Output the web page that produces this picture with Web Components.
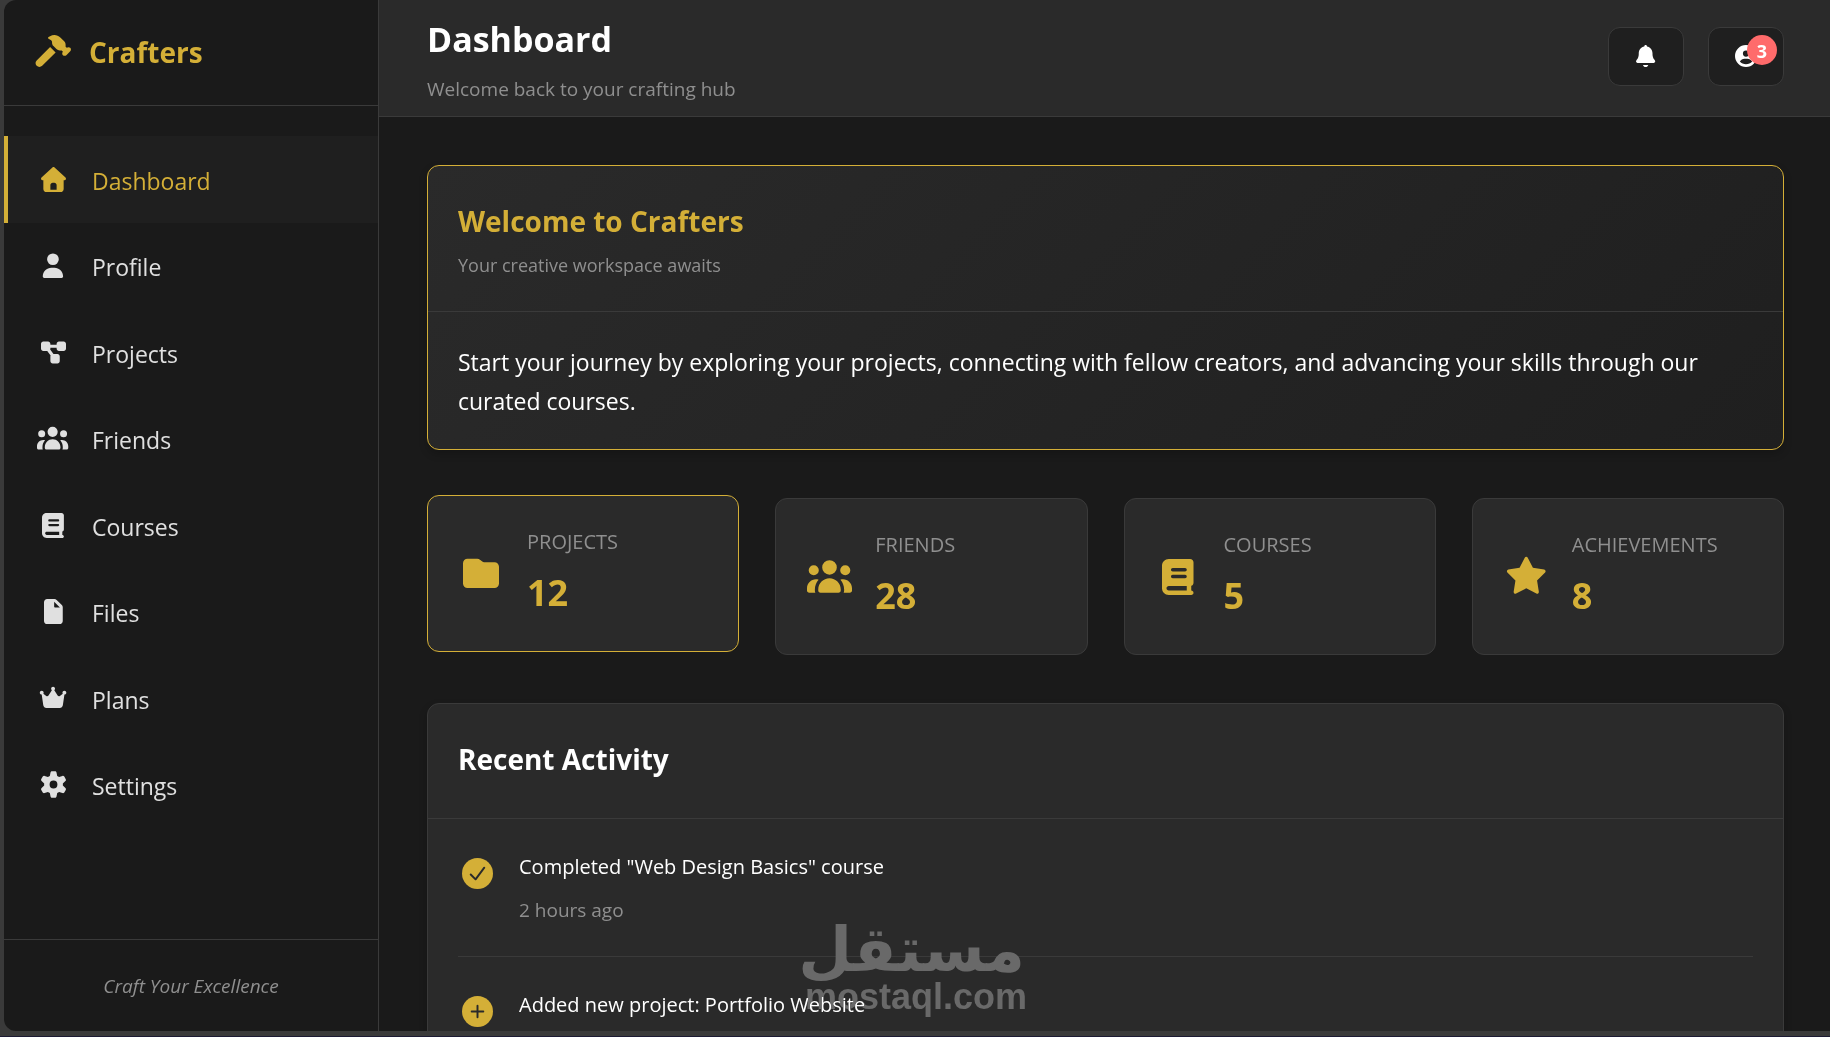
<!DOCTYPE html>
<html lang="en">
<head>
<meta charset="utf-8">
<meta name="viewport" content="width=device-width, initial-scale=1">
<title>Crafters - Dashboard</title>
<style>
    html, body { height: 100%; }
    body
    {
        margin: 0;
        overflow: hidden;
        background: #3a3a3a;
        color: #ffffff;
        font-family: "Segoe UI", "Open Sans", "Noto Sans", sans-serif;

        --gold: #d4af37;
        --dark: #1a1a1a;
        --card: #2a2a2a;
        --line: #3a3a3a;
        --muted: #8f8f8f;
        --text: #e0e0e0;
    }
</style>
</head>
<body>

<crafters-app>
    <crafters-sidebar slot="sidebar">
        <span slot="brand">Crafters</span>
        <nav-item icon="house" href="#dashboard" active>Dashboard</nav-item>
        <nav-item icon="user" href="#profile">Profile</nav-item>
        <nav-item icon="diagram" href="#projects">Projects</nav-item>
        <nav-item icon="users" href="#friends">Friends</nav-item>
        <nav-item icon="book" href="#courses">Courses</nav-item>
        <nav-item icon="file" href="#files">Files</nav-item>
        <nav-item icon="crown" href="#plans">Plans</nav-item>
        <nav-item icon="gear" href="#settings">Settings</nav-item>
        <span slot="footer">Craft Your Excellence</span>
    </crafters-sidebar>

    <page-header slot="header">
        <span slot="title">Dashboard</span>
        <span slot="subtitle">Welcome back to your crafting hub</span>
        <icon-button slot="actions" icon="bell" label="Notifications"></icon-button>
        <icon-button slot="actions" icon="account" label="Account" badge="3"></icon-button>
    </page-header>

    <content-card highlight>
        <span slot="title">Welcome to Crafters</span>
        <span slot="subtitle">Your creative workspace awaits</span>
        <card-text>Start your journey by exploring your projects, connecting with fellow creators, and advancing your skills through our curated courses.</card-text>
    </content-card>

    <stat-grid>
        <stat-card icon="folder" label="Projects" raised>12</stat-card>
        <stat-card icon="users" label="Friends">28</stat-card>
        <stat-card icon="book" label="Courses">5</stat-card>
        <stat-card icon="star" label="Achievements">8</stat-card>
    </stat-grid>

    <content-card>
        <span slot="title">Recent Activity</span>
        <activity-item icon="check" time="2 hours ago">Completed "Web Design Basics" course</activity-item>
        <activity-item icon="plus">Added new project: Portfolio Website</activity-item>
    </content-card>

    <water-mark slot="overlay">
        <span slot="name">مستقل</span>
        <span slot="site">mostaql.com</span>
    </water-mark>
</crafters-app>

<script>

// name: [viewBox, markup]
const ICONS =
{
    hammer: ["32 -16 576 528", `<path d="M246.9 18.3L271 3.8c21.6-13 46.3-19.8 71.5-19.8 36.8 0 72.2 14.6 98.2 40.7l63.9 63.9c15 15 23.4 35.4 23.4 56.6l0 30.9 19.7 19.7 0 0c15.6-15.6 40.9-15.6 56.6 0s15.6 40.9 0 56.6l-64 64c-15.6 15.6-40.9 15.6-56.6 0s-15.6-40.9 0-56.6L464 240l-30.9 0c-21.2 0-41.6-8.4-56.6-23.4l-49.1-49.1c-15-15-23.4-35.4-23.4-56.6l0-12.7c0-11.2-5.9-21.7-15.5-27.4l-41.6-25c-10.4-6.2-10.4-21.2 0-27.4zM50.7 402.7l222.1-222.1 90.5 90.5-222.1 222.1c-25 25-65.5 25-90.5 0s-25-65.5 0-90.5z"/>`],
    house: ["0 0 512 512", `<path d="M277.8 8.6c-12.3-11.4-31.3-11.4-43.5 0l-224 208c-9.6 9-12.8 22.9-8 35.1S18.8 272 32 272l16 0 0 176c0 35.3 28.7 64 64 64l288 0c35.3 0 64-28.7 64-64l0-176 16 0c13.2 0 25-8.1 29.8-20.3s1.6-26.2-8-35.1l-224-208zM240 320l32 0c26.5 0 48 21.5 48 48l0 96-128 0 0-96c0-26.5 21.5-48 48-48z"/>`],
    user: ["0 0 448 512", `<path d="M224 248a120 120 0 1 0 0-240 120 120 0 1 0 0 240zm-29.7 56C95.8 304 16 383.8 16 482.3 16 498.7 29.3 512 45.7 512l356.6 0c16.4 0 29.7-13.3 29.7-29.7 0-98.5-79.8-178.3-178.3-178.3l-59.4 0z"/>`],
    diagram: ["0 0 512 512", `<path d="M0 80C0 53.5 21.5 32 48 32l96 0c26.5 0 48 21.5 48 48l0 16 128 0 0-16c0-26.5 21.5-48 48-48l96 0c26.5 0 48 21.5 48 48l0 96c0 26.5-21.5 48-48 48l-96 0c-26.5 0-48-21.5-48-48l0-16-128 0 0 16c0 7.3-1.7 14.3-4.6 20.5l68.6 91.5 80 0c26.5 0 48 21.5 48 48l0 96c0 26.5-21.5 48-48 48l-96 0c-26.5 0-48-21.5-48-48l0-96c0-7.3 1.7-14.3 4.6-20.5L128 224l-80 0c-26.5 0-48-21.5-48-48L0 80z"/>`],
    users: ["0 0 640 512", `<path d="M320 16a104 104 0 1 1 0 208 104 104 0 1 1 0-208zM96 88a72 72 0 1 1 0 144 72 72 0 1 1 0-144zM0 416c0-70.7 57.3-128 128-128 12.8 0 25.2 1.9 36.9 5.4-32.9 36.8-52.9 85.4-52.9 138.6l0 16c0 11.4 2.4 22.2 6.7 32L32 480c-17.7 0-32-14.3-32-32l0-32zm521.3 64c4.3-9.8 6.7-20.6 6.7-32l0-16c0-53.2-20-101.8-52.9-138.6 11.7-3.5 24.1-5.4 36.9-5.4 70.7 0 128 57.3 128 128l0 32c0 17.7-14.3 32-32 32l-86.7 0zM472 160a72 72 0 1 1 144 0 72 72 0 1 1 -144 0zM160 432c0-88.4 71.6-160 160-160s160 71.6 160 160l0 16c0 17.7-14.3 32-32 32l-256 0c-17.7 0-32-14.3-32-32l0-16z"/>`],
    book: ["0 0 448 512", `<path d="M384 512L96 512c-53 0-96-43-96-96L0 96C0 43 43 0 96 0L400 0c26.5 0 48 21.5 48 48l0 288c0 20.9-13.4 38.7-32 45.3l0 66.7c17.7 0 32 14.3 32 32s-14.3 32-32 32l-32 0zM96 384c-17.7 0-32 14.3-32 32s14.3 32 32 32l256 0 0-64-256 0zm32-232c0 13.3 10.7 24 24 24l176 0c13.3 0 24-10.7 24-24s-10.7-24-24-24l-176 0c-13.3 0-24 10.7-24 24zm24 72c-13.3 0-24 10.7-24 24s10.7 24 24 24l176 0c13.3 0 24-10.7 24-24s-10.7-24-24-24l-176 0z"/>`],
    file: ["0 0 384 512", `<path d="M0 64C0 28.7 28.7 0 64 0L213.5 0c17 0 33.3 6.7 45.3 18.7L365.3 125.3c12 12 18.7 28.3 18.7 45.3L384 448c0 35.3-28.7 64-64 64L64 512c-35.3 0-64-28.7-64-64L0 64zm208-5.5l0 93.5c0 13.3 10.7 24 24 24L325.5 176 208 58.5z"/>`],
    crown: ["0 0 576 512", `<path d="M313 87.2c9.2-7.3 15.2-18.6 15.2-31.2 0-22.1-17.9-40-40-40s-40 17.9-40 40c0 12.6 5.9 23.9 15.1 31.2L194.6 194.8c-10 15.7-31.3 19.6-46.2 8.4L88.9 158.7c4.5-6.4 7.1-14.3 7.1-22.7 0-22.1-17.9-40-40-40s-40 17.9-40 40c0 21.8 17.5 39.6 39.2 40L87.8 393.5c4.7 31.3 31.6 54.5 63.3 54.5l273.8 0c31.7 0 58.6-23.2 63.3-54.5L520.8 176c21.7-.4 39.2-18.2 39.2-40 0-22.1-17.9-40-40-40s-40 17.9-40 40c0 8.4 2.6 16.3 7.1 22.7l-59.4 44.6c-14.9 11.2-36.2 7.3-46.2-8.4L313 87.2z"/>`],
    gear: ["0 0 512 512", `<path d="M195.1 9.5C198.1-5.3 211.2-16 226.4-16l59.8 0c15.2 0 28.3 10.7 31.3 25.5L332 79.5c14.1 6 27.3 13.7 39.3 22.8l67.8-22.5c14.4-4.8 30.2 1.2 37.8 14.4l29.9 51.8c7.6 13.2 4.9 29.8-6.5 39.9L447 233.3c.9 7.4 1.3 15 1.3 22.7s-.5 15.3-1.3 22.7l53.4 47.5c11.4 10.1 14 26.8 6.5 39.9l-29.9 51.8c-7.6 13.1-23.4 19.2-37.8 14.4l-67.8-22.5c-12.1 9.1-25.3 16.7-39.3 22.8l-14.4 69.9c-3.1 14.9-16.2 25.5-31.3 25.5l-59.8 0c-15.2 0-28.3-10.7-31.3-25.5l-14.4-69.9c-14.1-6-27.2-13.7-39.3-22.8L73.5 432.3c-14.4 4.8-30.2-1.2-37.8-14.4L5.8 366.1c-7.6-13.2-4.9-29.8 6.5-39.9l53.4-47.5c-.9-7.4-1.3-15-1.3-22.7s.5-15.3 1.3-22.7L12.3 185.8c-11.4-10.1-14-26.8-6.5-39.9L35.7 94.1c7.6-13.2 23.4-19.2 37.8-14.4l67.8 22.5c12.1-9.1 25.3-16.7 39.3-22.8L195.1 9.5zM256.3 336a80 80 0 1 0 -.6-160 80 80 0 1 0 .6 160z"/>`],
    bell: ["0 0 448 512", `<path d="M224 0c-17.7 0-32 14.3-32 32l0 3.2C119 50 64 114.6 64 192l0 21.7c0 48.1-16.4 94.8-46.4 132.4L7.8 358.3C2.7 364.6 0 372.4 0 380.5 0 400.1 15.9 416 35.5 416l376.9 0c19.6 0 35.5-15.9 35.5-35.5 0-8.1-2.7-15.9-7.8-22.2l-9.8-12.2C400.4 308.5 384 261.8 384 213.7l0-21.7c0-77.4-55-142-128-156.8l0-3.2c0-17.7-14.3-32-32-32zM162 464c7.1 27.6 32.2 48 62 48s54.9-20.4 62-48l-124 0z"/>`],
    account: ["0 0 512 512", `<path d="M399 384.2C376.9 345.8 335.4 320 288 320l-64 0c-47.4 0-88.9 25.8-111 64.2 35.2 39.2 86.2 63.8 143 63.8s107.8-24.7 143-63.8zM0 256a256 256 0 1 1 512 0 256 256 0 1 1 -512 0zm256 16a72 72 0 1 0 0-144 72 72 0 1 0 0 144z"/>`],
    folder: ["0 24 512 512", `<path d="M64 480l384 0c35.3 0 64-28.7 64-64l0-240c0-35.3-28.7-64-64-64L298.7 112c-6.9 0-13.7-2.2-19.2-6.4L241.1 76.8C230 68.5 216.5 64 202.7 64L64 64C28.7 64 0 92.7 0 128L0 416c0 35.3 28.7 64 64 64z"/>`],
    star: ["0 0 576 512", `<path d="M309.5-18.9c-4.1-8-12.4-13.1-21.4-13.1s-17.3 5.1-21.4 13.1L193.1 125.3 33.2 150.7c-8.9 1.4-16.3 7.7-19.1 16.3s-.5 18 5.8 24.4l114.4 114.5-25.2 159.9c-1.4 8.9 2.3 17.9 9.6 23.2s16.9 6.1 25 2L288.1 417.6 432.4 491c8 4.1 17.7 3.3 25-2s11-14.2 9.6-23.2L441.7 305.9 556.1 191.4c6.4-6.4 8.6-15.8 5.8-24.4s-10.1-14.9-19.1-16.3L383 125.3 309.5-18.9z"/>`],
    check: ["0 0 32 32", `<circle cx="16" cy="16" r="16"/><path d="M9 17l5 5 9-12" fill="none" stroke="#2a2a2a" stroke-width="2" stroke-linecap="round" stroke-linejoin="round"/>`],
    plus: ["0 0 32 32", `<circle cx="16" cy="16" r="16"/><path d="M16 10v12M10 16h12" fill="none" stroke="#2a2a2a" stroke-width="2" stroke-linecap="round"/>`]
};

const icon = name => `<svg viewBox="${ICONS[name][0]}" fill="currentColor" aria-hidden="true">${ICONS[name][1]}</svg>`;

class CraftersApp extends HTMLElement
{
    constructor()
    {
        super();
        this.attachShadow({mode: 'open'}).innerHTML = `
            <style>
                :host
                {
                    box-sizing: border-box;
                    height: 100vh;
                    display: flex;
                    padding: 0 0 5px 4px;
                    border-bottom: 1px solid #1c1a33;
                }
                slot[name=sidebar] { display: contents; }
                .page
                {
                    position: relative;
                    flex: 1;
                    min-width: 0;
                    overflow: hidden;
                    background: var(--dark);
                }
                main
                {
                    display: flex;
                    flex-direction: column;
                    gap: 48px;
                    padding: 48px 46px 48px 48px;
                }
            </style>
            <slot name="sidebar"></slot>
            <div class="page">
                <slot name="header"></slot>
                <main><slot></slot></main>
                <slot name="overlay"></slot>
            </div>
        `;
    }
}

class CraftersSidebar extends HTMLElement
{
    constructor()
    {
        super();
        this.attachShadow({mode: 'open'}).innerHTML = `
            <style>
                :host
                {
                    flex: none;
                    display: flex;
                    flex-direction: column;
                    width: 374px;
                    background: var(--dark);
                    border-right: 1px solid var(--line);
                    border-radius: 12px 0 0 12px;
                }
                .brand
                {
                    display: flex;
                    align-items: center;
                    gap: 18px;
                    height: 103px;
                    padding: 0 31px 2px;
                    border-bottom: 1px solid var(--line);
                    color: var(--gold);
                    font-size: 28px;
                    font-weight: 700;
                }
                .brand svg { width: 36px; height: 32px; padding-bottom: 2px; }
                nav
                {
                    flex: 1;
                    display: grid;
                    grid-auto-rows: 1fr;
                    padding: 30px 0 111px;
                }
                footer
                {
                    padding: 32px 0 31px;
                    border-top: 1px solid var(--line);
                    color: var(--muted);
                    font-size: 19px;
                    line-height: 28px;
                    font-style: italic;
                    text-align: center;
                }
            </style>
            <div class="brand">${icon("hammer")}<slot name="brand"></slot></div>
            <nav><slot></slot></nav>
            <footer><slot name="footer"></slot></footer>
        `;
    }
}

class NavItem extends HTMLElement
{
    constructor()
    {
        super();
        this.attachShadow({mode: 'open'}).innerHTML = `
            <style>
                :host { display: flex; }
                a
                {
                    flex: 1;
                    display: flex;
                    align-items: center;
                    gap: 22px;
                    padding: 0 28px;
                    border-left: 4px solid transparent;
                    color: var(--text);
                    font-size: 23px;
                    text-decoration: none;
                }
                :host([active]) a
                {
                    background: #1f1f1f;
                    border-color: var(--gold);
                    color: var(--gold);
                }
                .icon
                {
                    display: flex;
                    justify-content: center;
                    width: 34px;
                }
                .text { padding-top: 3px; }
                svg { height: 25px; overflow: visible; }
            </style>
            <a href="${this.getAttribute("href")}">
                <span class="icon">${icon(this.getAttribute("icon"))}</span>
                <span class="text"><slot></slot></span>
            </a>
        `;
    }
}

class PageHeader extends HTMLElement
{
    constructor()
    {
        super();
        this.attachShadow({mode: 'open'}).innerHTML = `
            <style>
                :host
                {
                    display: flex;
                    justify-content: space-between;
                    align-items: center;
                    height: 116px;
                    padding: 0 46px 0 48px;
                    background: var(--card);
                    border-bottom: 1px solid var(--line);
                }
                h1
                {
                    margin: 0 0 12px;
                    padding-top: 2px;
                    font-size: 34px;
                    line-height: 48px;
                    font-weight: 700;
                }
                p
                {
                    margin: 0;
                    color: var(--muted);
                    font-size: 19px;
                    line-height: 28px;
                }
                .actions { display: flex; gap: 24px; padding-bottom: 4px; }
            </style>
            <div>
                <h1><slot name="title"></slot></h1>
                <p><slot name="subtitle"></slot></p>
            </div>
            <div class="actions"><slot name="actions"></slot></div>
        `;
    }
}

class IconButton extends HTMLElement
{
    constructor()
    {
        super();
        let badge = this.getAttribute("badge");
        this.attachShadow({mode: 'open'}).innerHTML = `
            <style>
                :host { display: block; position: relative; }
                button
                {
                    display: flex;
                    justify-content: center;
                    align-items: center;
                    width: 76px;
                    height: 59px;
                    padding: 0;
                    background: #1f1f1f;
                    border: 1px solid var(--line);
                    border-radius: 12px;
                    color: #ffffff;
                }
                svg { height: 22px; }
                .badge
                {
                    position: absolute;
                    top: 8px;
                    right: 7px;
                    width: 30px;
                    height: 30px;
                    background: #ff6b6b;
                    border-radius: 50%;
                    font-size: 18px;
                    line-height: 32px;
                    font-weight: 700;
                    text-align: center;
                }
            </style>
            <button type="button" aria-label="${this.getAttribute("label")}">${icon(this.getAttribute("icon"))}</button>
            ${badge ? `<span class="badge">${badge}</span>` : ""}
        `;
    }
}

class ContentCard extends HTMLElement
{
    constructor()
    {
        super();
        this.attachShadow({mode: 'open'}).innerHTML = `
            <style>
                :host
                {
                    display: block;
                    background: var(--card);
                    border: 1px solid var(--line);
                    border-radius: 12px;
                    box-shadow: 0 4px 8px rgba(0, 0, 0, 0.2);
                }
                :host([highlight])
                {
                    background: linear-gradient(135deg, #2a2a2a, #1f1f1f);
                    border-color: var(--gold);
                    --title: var(--gold);
                }
                header
                {
                    padding: 30px;
                    border-bottom: 1px solid var(--line);
                }
                h2
                {
                    margin: 0;
                    padding-bottom: 4px;
                    color: var(--title, #ffffff);
                    font-size: 28px;
                    line-height: 50px;
                    font-weight: 700;
                }
                p
                {
                    margin: 0;
                    color: var(--muted);
                    font-size: 18px;
                    line-height: 31px;
                }
                .body { padding: 0 30px; }
            </style>
            <header>
                <h2><slot name="title"></slot></h2>
                ${this.querySelector("[slot=subtitle]") ? `<p><slot name="subtitle"></slot></p>` : ""}
            </header>
            <div class="body"><slot></slot></div>
        `;
    }
}

class CardText extends HTMLElement
{
    constructor()
    {
        super();
        this.attachShadow({mode: 'open'}).innerHTML = `
            <style>
                :host
                {
                    display: block;
                    padding: 31px 0 28px;
                    font-size: 23px;
                    line-height: 39px;
                }
            </style>
            <slot></slot>
        `;
    }
}

class StatGrid extends HTMLElement
{
    constructor()
    {
        super();
        this.attachShadow({mode: 'open'}).innerHTML = `
            <style>
                :host
                {
                    display: grid;
                    grid-template-columns: repeat(4, 1fr);
                    gap: 36px;
                }
            </style>
            <slot></slot>
        `;
    }
}

class StatCard extends HTMLElement
{
    constructor()
    {
        super();
        this.attachShadow({mode: 'open'}).innerHTML = `
            <style>
                :host
                {
                    display: flex;
                    align-items: center;
                    gap: 16px;
                    padding: 30px 23px;
                    background: var(--card);
                    border: 1px solid var(--line);
                    border-radius: 12px;
                }
                :host([raised])
                {
                    border-color: var(--gold);
                    transform: translateY(-3px);
                }
                .icon
                {
                    display: flex;
                    justify-content: center;
                    width: 60px;
                    color: var(--gold);
                }
                svg { height: 36px; overflow: visible; }
                h3
                {
                    margin: 0;
                    color: var(--muted);
                    font-size: 20px;
                    line-height: 31px;
                    font-weight: 400;
                    text-transform: uppercase;
                }
                .value
                {
                    padding-top: 8px;
                    color: var(--gold);
                    font-size: 36px;
                    line-height: 56px;
                    font-weight: 700;
                }
            </style>
            <div class="icon">${icon(this.getAttribute("icon"))}</div>
            <div>
                <h3>${this.getAttribute("label")}</h3>
                <div class="value"><slot></slot></div>
            </div>
        `;
    }
}

class ActivityItem extends HTMLElement
{
    constructor()
    {
        super();
        let time = this.getAttribute("time");
        this.attachShadow({mode: 'open'}).innerHTML = `
            <style>
                :host
                {
                    display: flex;
                    align-items: flex-start;
                    gap: 26px;
                    padding: 30px 4px;
                    border-bottom: 1px solid var(--line);
                }
                :host(:last-child) { border-bottom: none; }
                svg
                {
                    width: 31px;
                    height: 31px;
                    padding-top: 9px;
                    color: var(--gold);
                }
                .title
                {
                    font-size: 20px;
                    line-height: 36px;
                }
                .time
                {
                    padding-top: 9px;
                    color: var(--muted);
                    font-size: 19px;
                    line-height: 32px;
                }
            </style>
            ${icon(this.getAttribute("icon"))}
            <div>
                <div class="title"><slot></slot></div>
                ${time ? `<div class="time">${time}</div>` : ""}
            </div>
        `;
    }
}

class WaterMark extends HTMLElement
{
    constructor()
    {
        super();
        // lighten keeps the page's white text readable above the mark
        this.attachShadow({mode: 'open'}).innerHTML = `
            <style>
                :host
                {
                    position: absolute;
                    left: 426px;
                    bottom: 14px;
                    width: 220px;
                    color: #696969;
                    font-family: "Liberation Sans", "DejaVu Sans", sans-serif;
                    font-weight: 700;
                    text-align: center;
                    white-space: nowrap;
                    mix-blend-mode: lighten;
                    pointer-events: none;
                }
                .name
                {
                    font-family: "DejaVu Sans", sans-serif;
                    font-size: 62px;
                    line-height: 54px;
                }
                .site
                {
                    font-size: 36px;
                    line-height: 40px;
                }
            </style>
            <div class="name" lang="ar" dir="rtl"><slot name="name"></slot></div>
            <div class="site"><slot name="site"></slot></div>
        `;
    }
}

customElements.define("crafters-app", CraftersApp);
customElements.define("crafters-sidebar", CraftersSidebar);
customElements.define("nav-item", NavItem);
customElements.define("page-header", PageHeader);
customElements.define("icon-button", IconButton);
customElements.define("content-card", ContentCard);
customElements.define("card-text", CardText);
customElements.define("stat-grid", StatGrid);
customElements.define("stat-card", StatCard);
customElements.define("activity-item", ActivityItem);
customElements.define("water-mark", WaterMark);

</script>
</body>
</html>
